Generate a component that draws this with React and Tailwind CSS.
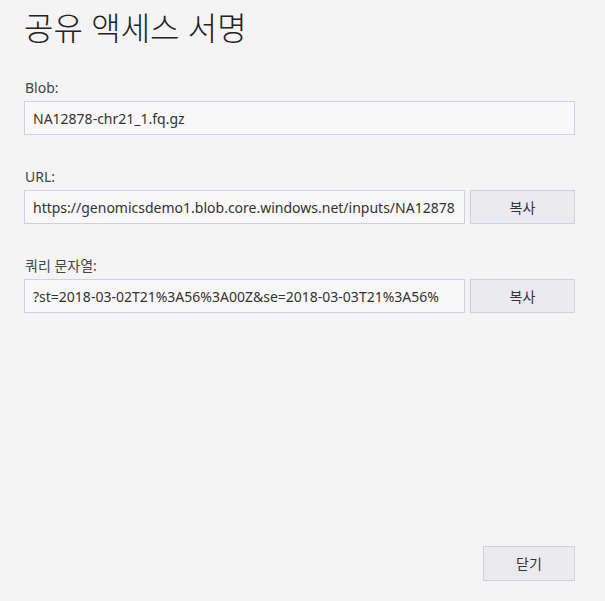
export default function App() {
  const font = { fontFamily: '"Segoe UI", "Noto Sans", "Noto Sans CJK KR", sans-serif' };
  return (
    <div
      className="flex h-[601px] w-full flex-col bg-[#f4f4f4] pl-[24px] pr-[30px] pb-[20px] text-[#333]"
      style={font}
    >
      <h1 className="mt-[8px] h-[40px] text-[32px] font-light leading-[40px] text-[#222]">
        공유 액세스 서명
      </h1>

      <div className="mt-[30px] flex flex-col">
        <label className="h-[20px] pl-[1px] text-[14px] leading-[20px] text-[#444]">Blob:</label>
        <div className="mt-[3px] flex h-[34px] items-center overflow-hidden whitespace-nowrap border border-[#d0d0df] bg-[#f8f8f8] px-[8px] text-[14px]">
          NA12878-chr21_1.fq.gz
        </div>
      </div>

      <div className="mt-[32px] flex flex-col">
        <label className="h-[20px] pl-[1px] text-[14px] leading-[20px] text-[#444]">URL:</label>
        <div className="mt-[3px] flex h-[34px] gap-[5px]">
          <div className="flex min-w-0 flex-1 items-center overflow-hidden whitespace-nowrap border border-[#d0d0df] bg-[#f8f8f8] px-[8px] text-[14px]">
            https://genomicsdemo1.blob.core.windows.net/inputs/NA12878
          </div>
          <button className="w-[105px] shrink-0 border border-[#d0d0df] bg-[#ebebef] text-[14px] text-[#333]">
            복사
          </button>
        </div>
      </div>

      <div className="mt-[32px] flex flex-col">
        <label className="h-[20px] pl-[1px] text-[14px] leading-[20px] text-[#444]">쿼리 문자열:</label>
        <div className="mt-[3px] flex h-[34px] gap-[5px]">
          <div className="flex min-w-0 flex-1 items-center overflow-hidden whitespace-nowrap border border-[#d0d0df] bg-[#f8f8f8] px-[8px] text-[14px]">
            ?st=2018-03-02T21%3A56%3A00Z&amp;se=2018-03-03T21%3A56%
          </div>
          <button className="w-[105px] shrink-0 border border-[#d0d0df] bg-[#ebebef] text-[14px] text-[#333]">
            복사
          </button>
        </div>
      </div>

      <div className="flex-1" />

      <div className="flex justify-end">
        <button className="h-[35px] w-[92px] border border-[#d0d0df] bg-[#ebebef] text-[14px] text-[#333]">
          닫기
        </button>
      </div>
    </div>
  );
}
